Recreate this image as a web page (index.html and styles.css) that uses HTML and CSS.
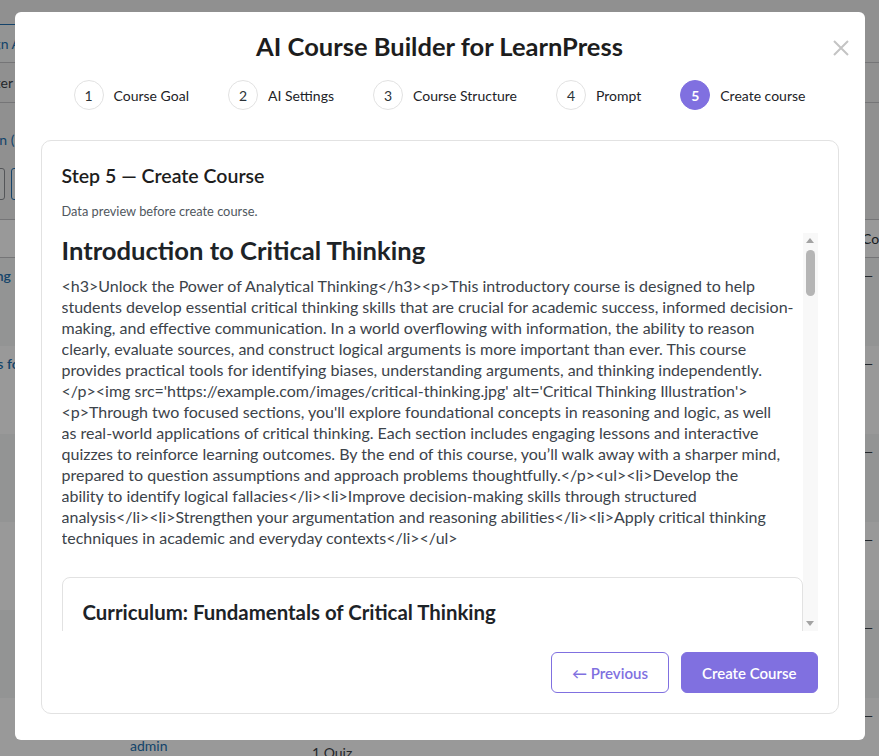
FILE: index.html
```html
<!DOCTYPE html>
<html lang="en">
<head>
  <meta charset="UTF-8" />
  <meta name="viewport" content="width=device-width, initial-scale=1.0"/>
  <title>AI Course Builder for LearnPress</title>
  <link rel="stylesheet" href="styles.css">
</head>

<body>
  <!-- admin page under the modal -->
  <div class="wp-screen">
    <div class="wp-page">
      <div class="wp-nav">
        <span class="wp-tab">Design AI</span>
        <span class="wp-tab">Settings</span>
      </div>
      <div class="wp-toolbar">Filter</div>
      <div class="wp-views">Open (1)</div>
      <div class="wp-bulk">
        <span class="wp-btn">Bulk</span>
        <span class="wp-btn primary">Apply</span>
      </div>
      <table class="wp-table">
        <thead>
          <tr><th>Title</th><th>Author</th><th>Content</th><th>Course</th></tr>
        </thead>
        <tbody>
          <tr><td><a>Making Decisions</a></td><td><div class="avatar"></div><a>admin</a></td><td class="count">1 Quiz</td><td>—</td></tr>
          <tr><td><a>Basics for Logic</a></td><td><div class="avatar"></div><a>admin</a></td><td class="count">1 Quiz</td><td>—</td></tr>
          <tr><td><a>Logic</a></td><td><div class="avatar"></div><a>admin</a></td><td class="count">1 Quiz</td><td>—</td></tr>
          <tr><td><a>Bias</a></td><td><div class="avatar"></div><a>admin</a></td><td class="count">1 Quiz</td><td>—</td></tr>
          <tr><td><a>Ideas</a></td><td><div class="avatar"></div><a>admin</a></td><td class="count">1 Quiz</td><td>—</td></tr>
          <tr><td><a>Quiz</a></td><td><div class="avatar"></div><a>admin</a></td><td class="count">1 Quiz</td><td>—</td></tr>
        </tbody>
      </table>
    </div>
  </div>

  <div class="overlay">
    <div class="modal">
      <button class="close-btn" aria-label="Close">
        <svg width="16" height="16" viewBox="0 0 16 16">
          <path d="M1 1 L15 15 M15 1 L1 15" stroke="#c4c4c4" stroke-width="2" fill="none"/>
        </svg>
      </button>

      <h1 class="modal-title">AI Course Builder for LearnPress</h1>

      <div class="steps">
        <div class="step"><span class="step-num">1</span><span class="step-label">Course Goal</span></div>
        <div class="step"><span class="step-num">2</span><span class="step-label">AI Settings</span></div>
        <div class="step"><span class="step-num">3</span><span class="step-label">Course Structure</span></div>
        <div class="step"><span class="step-num">4</span><span class="step-label">Prompt</span></div>
        <div class="step active"><span class="step-num">5</span><span class="step-label">Create course</span></div>
      </div>

      <div class="card">
        <h3 class="step-title">Step 5 — Create Course</h3>
        <div class="step-desc">Data preview before create course.</div>

        <div class="preview">
          <div class="preview-body">
            <h2 class="course-name">Introduction to Critical Thinking</h2>
            <p class="course-desc">&lt;h3&gt;Unlock the Power of Analytical Thinking&lt;/h3&gt;&lt;p&gt;This introductory course is designed to help<br>students develop essential critical thinking skills that are crucial for academic success, informed decision-<br>making, and effective communication. In a world overflowing with information, the ability to reason<br>clearly, evaluate sources, and construct logical arguments is more important than ever. This course<br>provides practical tools for identifying biases, understanding arguments, and thinking independently.<br>&lt;/p&gt;&lt;img src='https://example.com/images/critical-thinking.jpg' alt='Critical Thinking Illustration'&gt;<br>&lt;p&gt;Through two focused sections, you'll explore foundational concepts in reasoning and logic, as well<br>as real-world applications of critical thinking. Each section includes engaging lessons and interactive<br>quizzes to reinforce learning outcomes. By the end of this course, you’ll walk away with a sharper mind,<br>prepared to question assumptions and approach problems thoughtfully.&lt;/p&gt;&lt;ul&gt;&lt;li&gt;Develop the<br>ability to identify logical fallacies&lt;/li&gt;&lt;li&gt;Improve decision-making skills through structured<br>analysis&lt;/li&gt;&lt;li&gt;Strengthen your argumentation and reasoning abilities&lt;/li&gt;&lt;li&gt;Apply critical thinking<br>techniques in academic and everyday contexts&lt;/li&gt;&lt;/ul&gt;</p>

            <div class="curriculum">
              <div class="curriculum-title">Curriculum: Fundamentals of Critical Thinking</div>
            </div>
          </div>
          <div class="scrollbar">
            <span class="sb-up"></span>
            <span class="sb-thumb"></span>
            <span class="sb-down"></span>
          </div>
        </div>

        <div class="actions">
          <button class="btn btn-outline">← Previous</button>
          <button class="btn btn-primary">Create Course</button>
        </div>
      </div>
    </div>
  </div>
</body>
</html>
```

FILE: styles.css
```css
body {
  margin: 0;
  font-family: "Segoe UI", Lato, "Open Sans", sans-serif;
  background-color: #f0f0f1;
  color: #3c434a;
  height: 756px;
  overflow: hidden;
}

/* admin page behind */
.wp-screen {
  width: 879px;
  height: 756px;
  overflow: hidden;
}

.wp-page {
  margin-left: -45px;
  width: 1000px;
  font-size: 14px;
}

.wp-nav {
  padding-top: 24px;
  border-bottom: 1px solid #c3c4c7;
  display: flex;
  gap: 6px;
}

.wp-tab {
  border: 1px solid #2271b1;
  border-bottom: none;
  padding: 0 10px;
  line-height: 37px;
  color: #2271b1;
  background-color: #f6f7f7;
}

.wp-toolbar {
  height: 39px;
  line-height: 39px;
  padding-left: 26px;
  border-bottom: 1px solid #c3c4c7;
}

.wp-views {
  padding: 28px 0 0 18px;
  color: #2271b1;
}

.wp-bulk {
  display: flex;
  gap: 6px;
  margin-top: 20px;
}

.wp-btn {
  border: 1px solid #8c8f94;
  border-radius: 3px;
  height: 30px;
  line-height: 30px;
  padding: 0 10px;
  background-color: #f6f7f7;
  width: 28px;
  color: transparent;
}

.wp-btn.primary {
  border-color: #2271b1;
}

.wp-table {
  margin-top: 19px;
  border-collapse: collapse;
  table-layout: fixed;
  width: 1000px;
  background-color: #fff;
  border-top: 1px solid #c3c4c7;
}

.wp-table th:nth-child(1) { width: 145px; }
.wp-table th:nth-child(2) { width: 162px; }
.wp-table th:nth-child(3) { width: 530px; }

.wp-table th {
  text-align: left;
  font-weight: 400;
  height: 37px;
  padding: 0 10px;
  color: #2c3338;
  border-bottom: 1px solid #c3c4c7;
}

.wp-table td {
  height: 88px;
  padding: 8px 10px;
  vertical-align: top;
  box-sizing: border-box;
  line-height: 20px;
}

.wp-table td.count {
  padding-top: 45px;
}

.wp-table tbody tr:nth-child(odd) td {
  background-color: #f6f7f7;
}

.wp-table td:first-child a {
  font-weight: 600;
  white-space: nowrap;
}

.wp-table a {
  color: #2271b1;
}

.avatar {
  width: 32px;
  height: 30px;
}

/* overlay + modal */
.overlay {
  position: fixed;
  inset: 0;
  background-color: rgba(0, 0, 0, 0.4);
  display: flex;
  justify-content: center;
  align-items: flex-start;
}

.modal {
  position: relative;
  width: 850px;
  height: 728px;
  margin-top: 12px;
  background-color: #fff;
  border-radius: 6px;
  box-sizing: border-box;
  padding: 19px 26px 26px;
  display: flex;
  flex-direction: column;
}

.close-btn {
  position: absolute;
  top: 28px;
  right: 16px;
  border: none;
  background: none;
  padding: 0;
  width: 16px;
  height: 16px;
  cursor: pointer;
}

.modal-title {
  margin: 0;
  text-align: center;
  font-size: 25.5px;
  line-height: 30px;
  font-weight: 700;
  color: #1d1d1d;
}

.steps {
  display: flex;
  justify-content: center;
  gap: 39px;
  margin-top: 19px;
}

.step {
  display: flex;
  align-items: center;
  gap: 10px;
  font-size: 14px;
  color: #1d2327;
}

.step-num {
  width: 30px;
  height: 30px;
  box-sizing: border-box;
  border: 1px solid #e2e2e2;
  border-radius: 50%;
  display: flex;
  align-items: center;
  justify-content: center;
  color: #2c3338;
}

.step.active .step-num {
  background-color: #8070e0;
  border-color: #8070e0;
  color: #fff;
  font-weight: 700;
}

.card {
  margin-top: 30px;
  flex: 1;
  min-height: 0;
  border: 1px solid #e2e2e2;
  border-radius: 10px;
  padding: 23px 20px 20px;
  display: flex;
  flex-direction: column;
}

.step-title {
  margin: 0;
  font-size: 19.5px;
  line-height: 24px;
  font-weight: 600;
  color: #1d1d1d;
}

.step-desc {
  margin-top: 14px;
  font-size: 12.8px;
  line-height: 18px;
  color: #50575e;
}

.preview {
  margin-top: 13px;
  flex: 1;
  min-height: 0;
  display: flex;
}

.preview-body {
  flex: 1;
  overflow: hidden;
}

.course-name {
  margin: 0;
  font-size: 25.6px;
  line-height: 34px;
  font-weight: 700;
  color: #1d2327;
}

.course-desc {
  margin: 8px 0 0;
  font-size: 16px;
  line-height: 21px;
  color: #3c434a;
  white-space: nowrap;
}

.curriculum {
  margin-top: 29px;
  border: 1px solid #e2e2e2;
  border-radius: 8px;
  padding: 22px 20px 40px;
}

.curriculum-title {
  font-size: 20.4px;
  line-height: 24px;
  font-weight: 700;
  color: #1d2327;
}

/* scrollbar drawn by hand */
.scrollbar {
  width: 15px;
  background-color: #f8f8f8;
  display: flex;
  flex-direction: column;
  align-items: center;
}

.sb-up,
.sb-down {
  width: 0;
  height: 0;
  border-left: 4px solid transparent;
  border-right: 4px solid transparent;
}

.sb-up {
  margin-top: 5px;
  border-bottom: 5px solid #a3a3a3;
}

.sb-thumb {
  margin-top: 7px;
  width: 9px;
  height: 46px;
  border-radius: 5px;
  background-color: #b5b5b5;
}

.sb-down {
  margin-top: auto;
  margin-bottom: 5px;
  border-top: 5px solid #a3a3a3;
}

.actions {
  margin-top: 21px;
  display: flex;
  justify-content: flex-end;
  gap: 12px;
}

.btn {
  height: 41px;
  padding: 0 20px;
  border-radius: 6px;
  font-family: inherit;
  font-size: 15px;
  font-weight: 600;
  cursor: pointer;
  box-sizing: border-box;
}

.btn-outline {
  background-color: #fff;
  border: 1px solid #8070e0;
  color: #8070e0;
}

.btn-primary {
  background-color: #8070e0;
  border: 1px solid #8070e0;
  color: #fff;
}
```
